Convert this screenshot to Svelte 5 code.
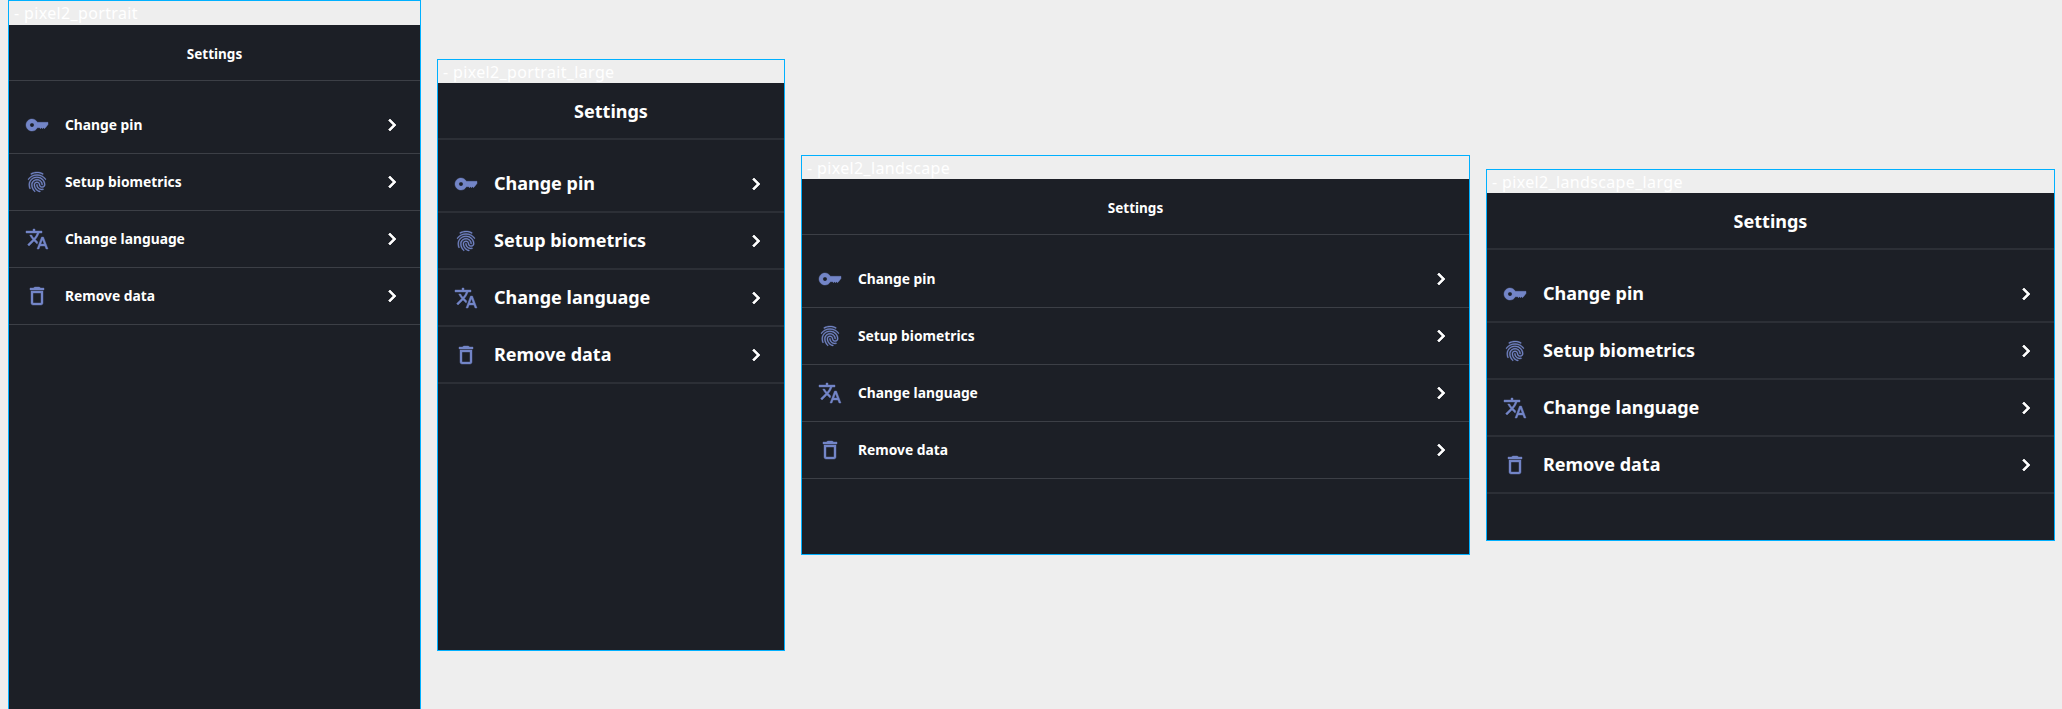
<script>
  const frames = [
    { name: 'pixel2_portrait', cls: 'f1', large: false },
    { name: 'pixel2_portrait_large', cls: 'f2', large: true },
    { name: 'pixel2_landscape', cls: 'f3', large: false },
    { name: 'pixel2_landscape_large', cls: 'f4', large: true }
  ];
  const rows = [
    { label: 'Change pin', icon: 'M12.300 9.300C11.400 7.400 9.400 6 7 6c-3.300 0-6 2.700-6 6s2.700 6 6 6c2.400 0 4.400-1.300 5.300-3.300h2.200l1 1 1-1 1 1 1-1 1 1 1.200-1.200L23 11.500V9.300zM7 14.100c-1.200 0-2.100-.9-2.100-2.100S5.800 9.900 7 9.900s2.100.9 2.100 2.100-.9 2.100-2.100 2.100z' },
    { label: 'Setup biometrics', icon: 'M17.81 4.47c-.08 0-.16-.02-.23-.06C15.66 3.42 14 3 12.01 3c-1.98 0-3.86.47-5.57 1.41-.24.13-.54.04-.68-.2-.13-.24-.04-.55.2-.68C7.82 2.52 9.86 2 12.01 2c2.13 0 3.99.47 6.03 1.52.25.13.34.43.21.67-.09.18-.26.28-.44.28zM3.5 9.72c-.1 0-.2-.03-.29-.09-.23-.16-.28-.47-.12-.7.99-1.4 2.25-2.5 3.75-3.27C9.98 4.04 14 4.03 17.15 5.65c1.5.77 2.76 1.86 3.75 3.25.16.22.11.54-.12.7-.23.16-.54.11-.7-.12-.9-1.26-2.04-2.25-3.39-2.94-2.87-1.47-6.54-1.47-9.4.01-1.36.7-2.5 1.7-3.4 2.96-.08.14-.23.21-.39.21zm6.25 12.07c-.13 0-.26-.05-.35-.15-.87-.87-1.34-1.43-2.01-2.64-.69-1.23-1.05-2.73-1.05-4.34 0-2.97 2.54-5.39 5.66-5.39s5.66 2.42 5.66 5.39c0 .28-.22.5-.5.5s-.5-.22-.5-.5c0-2.42-2.09-4.39-4.66-4.39-2.57 0-4.66 1.97-4.66 4.39 0 1.44.32 2.77.93 3.85.64 1.15 1.08 1.64 1.85 2.42.19.2.19.51 0 .71-.11.1-.24.15-.37.15zm7.17-1.85c-1.19 0-2.24-.3-3.1-.89-1.49-1.01-2.38-2.65-2.38-4.39 0-.28.22-.5.5-.5s.5.22.5.5c0 1.41.72 2.74 1.94 3.56.71.48 1.54.71 2.54.71.24 0 .64-.03 1.04-.1.27-.05.53.13.58.41.05.27-.13.53-.41.58-.57.11-1.07.12-1.21.12zM14.91 22c-.04 0-.09-.01-.13-.02-1.59-.44-2.63-1.03-3.72-2.1-1.4-1.39-2.17-3.24-2.17-5.22 0-1.62 1.38-2.94 3.08-2.94 1.7 0 3.08 1.32 3.08 2.94 0 1.07.93 1.94 2.08 1.94s2.08-.87 2.08-1.94c0-3.77-3.25-6.83-7.25-6.83-2.84 0-5.44 1.58-6.61 4.03-.39.81-.59 1.76-.59 2.8 0 .78.07 2.01.67 3.61.1.26-.03.55-.29.64-.26.1-.55-.04-.64-.29-.49-1.31-.73-2.61-.73-3.96 0-1.2.23-2.29.68-3.24 1.33-2.79 4.28-4.6 7.51-4.6 4.55 0 8.25 3.51 8.25 7.83 0 1.62-1.38 2.94-3.08 2.94s-3.08-1.32-3.08-2.94c0-1.07-.93-1.94-2.08-1.94s-2.08.87-2.08 1.94c0 1.71.66 3.31 1.87 4.51.95.94 1.86 1.46 3.27 1.85.27.07.42.35.35.61-.05.23-.26.38-.47.38z' },
    { label: 'Change language', icon: 'M12.87 15.07l-2.54-2.51.03-.03c1.74-1.94 2.98-4.17 3.71-6.53H17V4h-7V2H8v2H1v1.99h11.17C11.5 7.92 10.44 9.75 9 11.35 8.07 10.32 7.3 9.19 6.69 8h-2c.73 1.63 1.73 3.17 2.98 4.56l-5.09 5.02L4 19l5-5 3.11 3.11.76-2.04zM18.5 10h-2L12 22h2l1.12-3h4.75L21 22h2l-4.5-12zm-2.62 7l1.62-4.33L19.12 17h-3.24z' },
    { label: 'Remove data', icon: 'M6 19c0 1.1.9 2 2 2h8c1.1 0 2-.9 2-2V7H6v12zM8 9h8v10H8V9zm7.5-5l-1-1h-5l-1 1H5v2h14V4h-3.5z' }
  ];
</script>

<main class="canvas">
  {#each frames as frame}
    <section class="frame {frame.cls}" class:large={frame.large}>
      <div class="tag">- {frame.name}</div>
      <div class="screen">
        <header class="head">Settings</header>
        <ul class="list">
          {#each rows as row}
            <li class="row">
              <svg class="icon" viewBox="0 0 24 24" aria-hidden="true"><path d={row.icon} /></svg>
              <span class="label">{row.label}</span>
              <svg class="chev" viewBox="0 0 24 24" aria-hidden="true"><path d="M10 6L8.59 7.41 13.17 12l-4.58 4.59L10 18l6-6z" /></svg>
            </li>
          {/each}
        </ul>
      </div>
    </section>
  {/each}
</main>

<style>
  :global(body) {
    margin: 0;
    background: #eeeeee;
  }
  .canvas {
    position: relative;
    width: 2062px;
    height: 709px;
    overflow: hidden;
    background: #eeeeee;
    font-family: "Noto Sans", sans-serif;
  }
  .frame {
    position: absolute;
    box-sizing: border-box;
    display: flex;
    flex-direction: column;
    border: 1px solid #00b0ff;
  }
  .f1 { left: 8px; top: 0; width: 413px; height: 712px; }
  .f2 { left: 437px; top: 59px; width: 348px; height: 592px; }
  .f3 { left: 801px; top: 155px; width: 669px; height: 400px; }
  .f4 { left: 1486px; top: 169px; width: 569px; height: 372px; }
  .tag {
    height: 23px;
    padding-left: 5px;
    color: #ffffff;
    font: 400 16px/24px "Noto Sans", sans-serif;
    letter-spacing: 0.35px;
    white-space: nowrap;
    overflow: hidden;
  }
  .f1 .tag { height: 24px; }
  .screen {
    flex: 1;
    min-height: 0;
    background: #1c1f26;
    color: #ffffff;
  }
  .head {
    box-sizing: border-box;
    height: 56px;
    padding-top: 2px;
    display: flex;
    align-items: center;
    justify-content: center;
    border-bottom: 1px solid #3c3f46;
    font-size: 13.500px;
    font-weight: 700;
  }
  .list {
    list-style: none;
    margin: 0;
    padding: 16px 0 0;
  }
  .row {
    box-sizing: border-box;
    height: 57px;
    display: flex;
    align-items: center;
    gap: 16px;
    padding: 0 16px;
    border-bottom: 1px solid #3c3f46;
    font-size: 13.800px;
    font-weight: 700;
  }
  .large .head,
  .large .row {
    font-size: 18px;
    border-bottom: 2px solid #2c2f36;
  }
  .large .head {
    height: 57px;
    padding-top: 0;
  }
  .label {
    flex: 1;
    padding-bottom: 2px;
  }
  .icon {
    width: 24px;
    height: 24px;
    flex: none;
    fill: #7385c7;
    stroke: #7385c7;
    stroke-width: 0.4;
  }
  .chev {
    width: 24px;
    height: 24px;
    flex: none;
    fill: #ffffff;
    stroke: #ffffff;
    stroke-width: 0.7;
  }
</style>
